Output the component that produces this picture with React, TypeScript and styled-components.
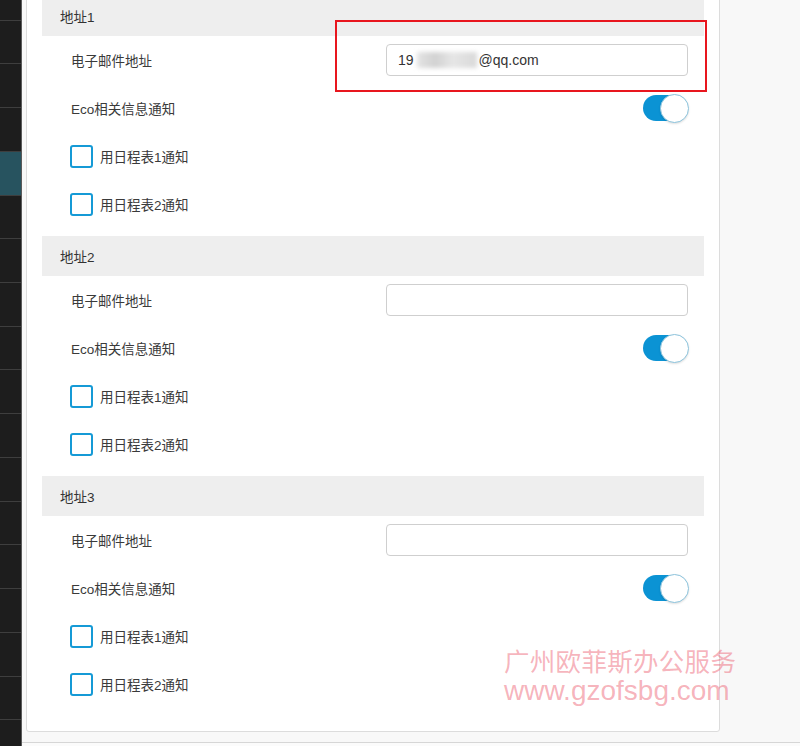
import React from "react";
import styled, { createGlobalStyle } from "styled-components";

const GlobalStyle = createGlobalStyle`
  html, body { margin: 0; padding: 0; }
  body {
    background: #f8f8f8;
    font-family: "Liberation Sans", "Noto Sans CJK SC", sans-serif;
    color: #333;
  }
  * { box-sizing: border-box; }
`;

const Page = styled.div`
  position: relative;
  display: flex;
  width: 800px;
  height: 746px;
  overflow: hidden;
  background: #f8f8f8;
`;

const Sidebar = styled.nav`
  width: 22px;
  flex: none;
  background: #1d1d1d;
  border-right: 1px solid #5a5a5a;
  display: flex;
  flex-direction: column;
  margin-top: -23px;
  height: 780px;
`;

const NavItem = styled.div<{ $active?: boolean }>`
  height: 43.73px;
  flex: none;
  border-bottom: 1px solid #3e3e3e;
  background: ${(p) => (p.$active ? "#27535f" : "transparent")};
`;

const Main = styled.main`
  flex: 1;
  display: flex;
  flex-direction: column;
  padding-left: 4px;
`;

const Card = styled.section`
  width: 694px;
  margin-top: -20px;
  padding: 15px;
  background: #fff;
  border: 1px solid #dcdcdc;
  border-radius: 3px;
`;

const Footer = styled.div`
  margin-top: 10px;
  margin-left: -4px;
  border-top: 1px solid #d6d6d6;
  height: 10px;
  background: #fbfbfb;
`;

const Section = styled.div`
  padding-bottom: 8px;
`;

const SectionHeader = styled.div`
  height: 40px;
  display: flex;
  align-items: center;
  padding-left: 18px;
  background: #eeeeee;
  font-size: 13.5px;
  color: #333;
`;

const Row = styled.div`
  height: 48px;
  display: flex;
  align-items: center;
  justify-content: space-between;
  padding: 0 16px 0 29px;
`;

const Label = styled.span`
  font-size: 13.5px;
  color: #3a3a3a;
`;

const EmailInput = styled.div`
  width: 302px;
  height: 32px;
  border: 1px solid #cfcfcf;
  border-radius: 4px;
  display: flex;
  align-items: center;
  padding-left: 11px;
  font-size: 14px;
  color: #333;
  background: #fff;
`;

const Blur = styled.span`
  display: inline-block;
  width: 60px;
  height: 16px;
  margin: 0 2px 0 3px;
  background: linear-gradient(90deg, #e4e4e4, #d2d2d2 30%, #e6e6e6 60%, #d9d9d9);
  filter: blur(2px);
`;

const Toggle = styled.div<{ $on?: boolean }>`
  width: 45px;
  height: 26px;
  border-radius: 13px;
  background: ${(p) => (p.$on ? "#0b93d4" : "#ccc")};
  display: flex;
  align-items: center;
  justify-content: ${(p) => (p.$on ? "flex-end" : "flex-start")};
`;

const Knob = styled.div`
  width: 29px;
  height: 29px;
  margin-right: -1px;
  border-radius: 50%;
  background: #fff;
  border: 1px solid #8cc3dc;
  box-shadow: 0 1px 2px rgba(0, 0, 0, 0.12);
`;

const CheckRow = styled.label`
  display: flex;
  align-items: center;
  gap: 7px;
  margin-left: -1px;
`;

const CheckBox = styled.span`
  width: 23px;
  height: 23px;
  border: 2.5px solid #159ad6;
  border-radius: 3px;
  background: #fff;
`;

const Highlight = styled.div`
  position: absolute;
  left: 335px;
  top: 20px;
  width: 372px;
  height: 72px;
  border: 2px solid #e8161e;
  pointer-events: none;
`;

const Watermark = styled.div`
  position: absolute;
  left: 504px;
  top: 645px;
  color: rgba(236, 86, 106, 0.45);
  pointer-events: none;
  display: flex;
  flex-direction: column;
  gap: 1px;
`;

const WmTitle = styled.div`
  font-family: "Noto Sans CJK SC", sans-serif;
  font-size: 25.5px;
  line-height: 30px;
  letter-spacing: 0.3px;
`;

const WmUrl = styled.div`
  font-family: "Liberation Sans", sans-serif;
  font-size: 28px;
  line-height: 30px;
`;

const sections = ["地址1", "地址2", "地址3"];

export default function App() {
  return (
    <>
      <GlobalStyle />
      <Page>
        <Sidebar>
          {Array.from({ length: 18 }).map((_, i) => (
            <NavItem key={i} $active={i === 4} />
          ))}
        </Sidebar>
        <Main>
          <Card>
            {sections.map((name, idx) => (
              <Section key={name}>
                <SectionHeader>{name}</SectionHeader>
                <Row>
                  <Label>电子邮件地址</Label>
                  <EmailInput>
                    {idx === 0 && (
                      <>
                        19
                        <Blur />
                        @qq.com
                      </>
                    )}
                  </EmailInput>
                </Row>
                <Row>
                  <Label>Eco相关信息通知</Label>
                  <Toggle $on>
                    <Knob />
                  </Toggle>
                </Row>
                <Row>
                  <CheckRow>
                    <CheckBox />
                    <Label>用日程表1通知</Label>
                  </CheckRow>
                </Row>
                <Row>
                  <CheckRow>
                    <CheckBox />
                    <Label>用日程表2通知</Label>
                  </CheckRow>
                </Row>
              </Section>
            ))}
          </Card>
          <Footer />
        </Main>
        <Highlight />
        <Watermark>
          <WmTitle>广州欧菲斯办公服务</WmTitle>
          <WmUrl>www.gzofsbg.com</WmUrl>
        </Watermark>
      </Page>
    </>
  );
}
